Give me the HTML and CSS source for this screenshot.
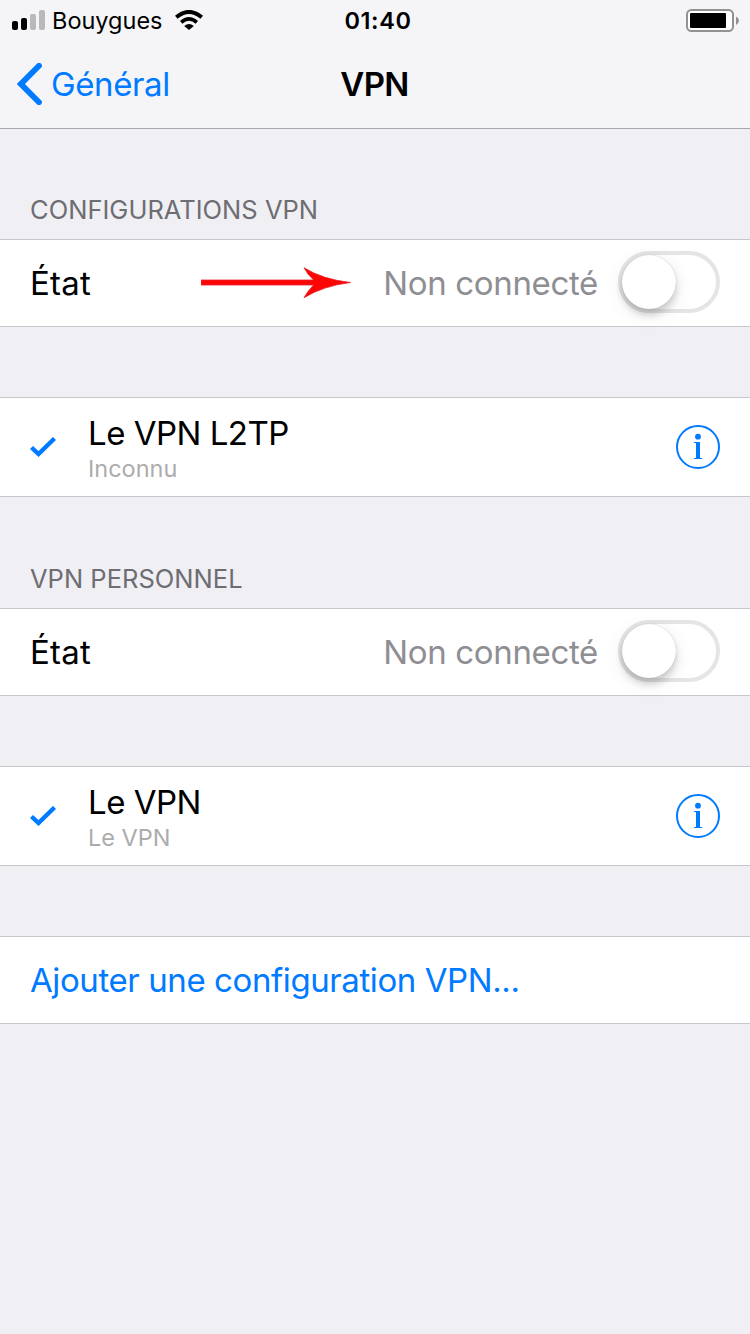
FILE: index.html
```html
<!DOCTYPE html>
<html lang="fr">
<head>
<meta charset="utf-8">
<title>VPN</title>
<link rel="stylesheet" href="styles.css">
</head>
<body>
<header class="top">
  <div class="status">
    <div class="status-left">
      <svg class="signal" width="33" height="20" viewBox="0 0 33 20"><rect x="0" y="11" width="6" height="9" rx="2"/><rect x="9" y="8" width="6" height="12" rx="2"/><rect x="18" y="4" width="6" height="16" rx="2" fill="#b9b9bb"/><rect x="27" y="0" width="6" height="20" rx="2" fill="#b9b9bb"/></svg>
      <span class="carrier">Bouygues</span>
      <svg class="wifi" width="28" height="20" viewBox="0 0 28 20"><path d="M14 20L9.2 15.9Q14 11.9 18.8 15.9Z"/><path d="M6.2 12.3Q14 5.6 21.8 12.3" fill="none" stroke="#000" stroke-width="3.7"/><path d="M1.3 7.3Q14 -3.5 26.7 7.3" fill="none" stroke="#000" stroke-width="3.9"/></svg>
    </div>
    <span class="clock">01:40</span>
    <svg class="battery" width="54" height="24" viewBox="0 0 54 24"><rect x="1" y="1" width="46" height="21" rx="4.5" fill="#fff" stroke="#929294" stroke-width="2"/><rect x="4" y="4" width="36" height="15" rx="1"/><path d="M50 7.5Q53 9 53 11.5T50 16Z" fill="#929294"/></svg>
  </div>
  <nav class="nav">
    <a class="back"><svg width="26" height="42" viewBox="0 0 26 42"><path d="M22 2.8L3.9 21L22 39.2" fill="none" stroke="#007aff" stroke-width="5.8" stroke-linecap="round"/></svg><span class="back-label">Général</span></a>
    <h1 class="title">VPN</h1>
  </nav>
</header>
<main class="list">
  <h2 class="section-title first">CONFIGURATIONS VPN</h2>
  <div class="row">
    <span class="label">État</span>
    <svg class="arrow" width="150" height="32" viewBox="0 0 150 32"><path d="M0 13H112.5Q106 7 103 .8Q122 12.5 149.5 15.5Q122 19 103 30.7Q106 25 112.5 18H0Z" fill="#fe0505" stroke="#e4252c" stroke-width=".8"/></svg>
    <span class="value">Non connecté</span>
    <span class="switch"></span>
  </div>
  <div class="row item">
    <svg class="check" width="26" height="20" viewBox="0 0 26 20"><path d="M1.5 10.5L8.5 17L24.5 1.5" fill="none" stroke="#007aff" stroke-width="4.4"/></svg>
    <div class="names"><span class="name">Le VPN L2TP</span><span class="sub">Inconnu</span></div>
    <svg class="info" width="44" height="44" viewBox="0 0 44 44"><circle cx="22" cy="22" r="21" fill="none" stroke="#007aff" stroke-width="2"/><circle cx="22" cy="11.7" r="2.9" fill="#007aff"/><path d="M18 17H24V33H26V34H18V33H20V18H18Z" fill="#007aff"/></svg>
  </div>
  <h2 class="section-title">VPN PERSONNEL</h2>
  <div class="row">
    <span class="label">État</span>
    <span class="value">Non connecté</span>
    <span class="switch"></span>
  </div>
  <div class="row item">
    <svg class="check" width="26" height="20" viewBox="0 0 26 20"><path d="M1.5 10.5L8.5 17L24.5 1.5" fill="none" stroke="#007aff" stroke-width="4.4"/></svg>
    <div class="names"><span class="name">Le VPN</span><span class="sub">Le VPN</span></div>
    <svg class="info" width="44" height="44" viewBox="0 0 44 44"><circle cx="22" cy="22" r="21" fill="none" stroke="#007aff" stroke-width="2"/><circle cx="22" cy="11.7" r="2.9" fill="#007aff"/><path d="M18 17H24V33H26V34H18V33H20V18H18Z" fill="#007aff"/></svg>
  </div>
  <div class="row spaced"><a class="add">Ajouter une configuration VPN...</a></div>
</main>
</body>
</html>
```
FILE: styles.css
```css
* { box-sizing: border-box; }
body { margin: 0; min-height: 1334px; background: #efeff4; color: #000; font: 400 33px/40px Inter, "Liberation Sans", sans-serif; }
svg { display: block; flex: none; }

.top { height: 129px; border-bottom: 1px solid #a7a7ac; background: #f5f5f7; }
.status { display: grid; grid-template-columns: 1fr auto 1fr; align-items: center; height: 40px; padding: 0 10px 0 12px; font-size: 23.5px; }
.status-left { display: flex; align-items: center; height: 40px; }
.carrier { width: 123px; margin-left: 7px; padding-top: 2px; line-height: 38px; }
.clock { padding: 2px 0 0 4px; line-height: 38px; font-weight: 600; letter-spacing: .6px; }
.battery { justify-self: end; margin-top: 2px; }

.nav { display: grid; grid-template-columns: 1fr auto 1fr; align-items: center; height: 88px; padding: 0 18px 0 17px; }
.back { display: flex; align-items: center; gap: 8px; color: #007aff; letter-spacing: -.4px; }
.title { margin: 0; font-size: 33px; line-height: 40px; font-weight: 600; letter-spacing: -.7px; }

.section-title { display: flex; align-items: flex-end; height: 111px; margin: 0; padding: 0 30px 14px; color: #6d6d72; font-size: 25.5px; line-height: 30px; font-weight: 400; letter-spacing: .02px; }
.section-title.first { height: 110px; }

.row { position: relative; display: flex; align-items: center; height: 88px; padding: 0 30px; background: #fff; border: solid #c8c7cc; border-width: 1px 0; }
.item { height: 100px; margin-top: 70px; }
.spaced { margin-top: 70px; }
.label { flex: 1; letter-spacing: .2px; }
.value { margin-right: 20px; color: #8e8e93; letter-spacing: -.35px; }
.arrow { position: absolute; left: 201px; top: 27px; }

.switch { width: 102px; height: 62px; border: 4px solid #e5e5e5; border-radius: 31px; margin-top: -2px; }
.switch::before { content: ""; display: block; width: 54px; height: 54px; border-radius: 50%; background: #fff; box-shadow: 0 6px 7px rgba(0, 0, 0, .16), 0 5px 20px rgba(0, 0, 0, .09), 0 0 1px rgba(0, 0, 0, .25); }

.names { display: flex; flex: 1; flex-direction: column; margin: 3px 0 0 32px; }
.name { letter-spacing: -.5px; }
.sub { color: #acacac; font-size: 23.5px; line-height: 32px; }
.add { color: #007aff; letter-spacing: -.41px; }
```
